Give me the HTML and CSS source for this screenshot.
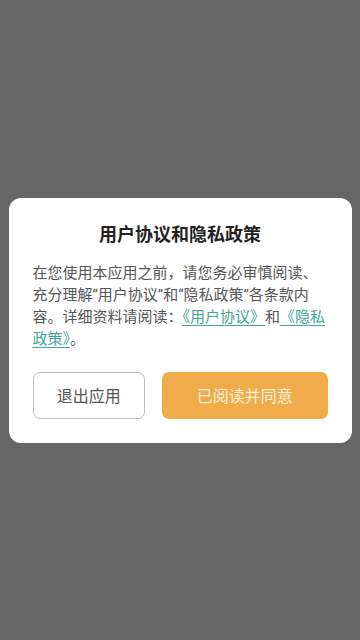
FILE: index.html
```html
<!DOCTYPE html>
<html lang="zh-CN">
<head>
<meta charset="utf-8">
<meta name="viewport" content="width=device-width, initial-scale=1">
<title>用户协议和隐私政策</title>
<link rel="stylesheet" href="styles.css">
</head>
<body>
<div class="overlay">
  <div class="dialog">
    <h1 class="title">用户协议和隐私政策</h1>
    <p class="content">在您使用本应用之前，请您务必审慎阅读、充分理解“用户协议”和“隐私政策”各条款内容。详细资料请阅读：<a class="link" href="#">《用户协议》</a>和<a class="link" href="#">《隐私政策》</a>。</p>
    <div class="actions">
      <button class="btn btn-exit">退出应用</button>
      <button class="btn btn-agree">已阅读并同意</button>
    </div>
  </div>
</div>
</body>
</html>
```
FILE: styles.css
```css
html, body {
  margin: 0;
  padding: 0;
  height: 100%;
}
body {
  font-family: "Roboto", "Noto Sans CJK SC", sans-serif;
  background: #666666;
}
.overlay {
  height: 100%;
  display: flex;
  align-items: center;
  justify-content: center;
}
.dialog {
  width: 343px;
  box-sizing: border-box;
  background: #ffffff;
  border-radius: 12px;
  padding: 24px 24px 24px 24px;
}
.title {
  margin: 0;
  font-size: 18px;
  line-height: 26px;
  font-weight: 700;
  color: #222222;
  text-align: center;
}
.content {
  margin: 14px 0 0 0;
  font-size: 15px;
  line-height: 22px;
  color: #555555;
}
.link {
  color: #43a595;
  text-decoration: underline;
  text-underline-offset: 3px;
}
.actions {
  margin-top: 22px;
  display: flex;
  gap: 17px;
}
.btn {
  height: 47px;
  border-radius: 7px;
  font-family: "Roboto", "Noto Sans CJK SC", sans-serif;
  font-size: 16px;
  padding: 0;
  cursor: pointer;
}
.btn-exit {
  flex: 2;
  background: #ffffff;
  border: 1px solid #bdbdbd;
  color: #555555;
}
.btn-agree {
  flex: 3;
  background: #f0ab4b;
  border: none;
  color: #fdf1de;
}
```
